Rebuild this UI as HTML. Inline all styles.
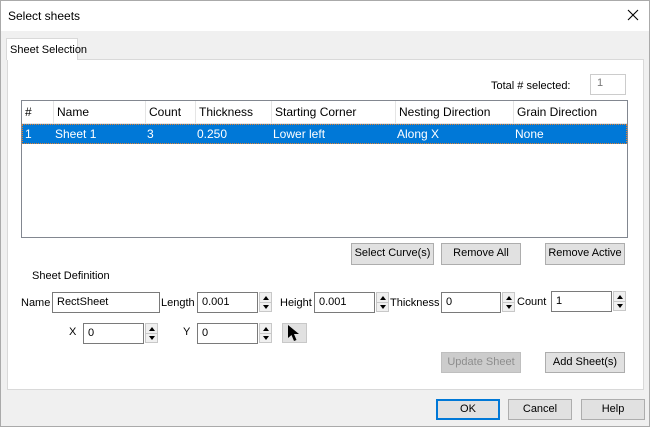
<!DOCTYPE html><html><head><style>
body{margin:0;width:650px;height:427px;overflow:hidden;background:#f0f0f0;font-family:"Liberation Sans",sans-serif;font-size:11px;color:#000;position:relative}
div,span{position:absolute;box-sizing:border-box;white-space:nowrap}
.t{line-height:14px}
.btn{background:#e1e1e1;border:1px solid #adadad;text-align:center;line-height:19px}
.in{background:#fff;border:1px solid #7a7a7a;padding-left:4px;line-height:18px}
.sp{width:13px;height:20px;background:#f0f0f0;border:1px solid #c8c8c8}
.sp:before{content:"";position:absolute;left:3px;top:3px;border:3px solid transparent;border-bottom:4px solid #000;border-top:0}
.sp:after{content:"";position:absolute;left:3px;top:12px;border:3px solid transparent;border-top:4px solid #000;border-bottom:0}
.sp i{position:absolute;left:0;right:0;top:9px;border-top:1px solid #c8c8c8}
.hd{top:0;height:23px;border-right:1px solid #e5e5e5;padding:4px 0 0 3px;font-size:12px}
</style></head><body>
<div style="left:0;top:0;width:650px;height:427px;border:1px solid #aaa"></div>
<div style="left:1px;top:1px;width:648px;height:30px;background:#fff"></div>
<div class="t" style="left:8px;top:9px;font-size:12px">Select sheets</div>
<svg style="position:absolute;left:627px;top:9px" width="12" height="12"><path d="M1 1L11 11M11 1L1 11" stroke="#000" stroke-width="1.1"/></svg>
<div style="left:7px;top:59px;width:637px;height:331px;background:#fff;border:1px solid #d9d9d9"></div>
<div style="left:6px;top:38px;width:72px;height:22px;background:#fff;border:1px solid #d9d9d9;border-bottom:none"></div>
<div class="t" style="left:10px;top:43px">Sheet Selection</div>
<div class="t" style="left:491px;top:79px">Total # selected:</div>
<div style="left:590px;top:74px;width:36px;height:21px;border:1px solid #ccc;color:#777;padding:2px 0 0 6px">1</div>
<div style="left:21px;top:100px;width:607px;height:138px;border:1px solid #828790;background:#fff">
<div class="hd" style="left:0;width:32px">#</div>
<div class="hd" style="left:32px;width:92px">Name</div>
<div class="hd" style="left:124px;width:50px">Count</div>
<div class="hd" style="left:174px;width:76px">Thickness</div>
<div class="hd" style="left:250px;width:124px">Starting Corner</div>
<div class="hd" style="left:374px;width:118px">Nesting Direction</div>
<div class="hd" style="left:492px;width:113px;border:none">Grain Direction</div>
<div style="left:0;top:22px;width:605px;height:1px;background:#e5e5e5"></div>
<div style="left:0;top:23px;width:605px;height:20px;background:#0078d7;border:1px dotted #e08030;color:#fff;font-size:12px">
<span class="t" style="left:2px;top:2px">1</span><span class="t" style="left:32px;top:2px">Sheet 1</span><span class="t" style="left:124px;top:2px">3</span><span class="t" style="left:174px;top:2px">0.250</span><span class="t" style="left:250px;top:2px">Lower left</span><span class="t" style="left:374px;top:2px">Along X</span><span class="t" style="left:492px;top:2px">None</span></div>
</div>
<div class="btn" style="left:351px;top:243px;width:83px;height:22px">Select Curve(s)</div>
<div class="btn" style="left:441px;top:243px;width:80px;height:22px">Remove All</div>
<div class="btn" style="left:545px;top:243px;width:80px;height:22px">Remove Active</div>
<div class="t" style="left:32px;top:269px">Sheet Definition</div>
<div class="t" style="left:21px;top:296px">Name</div><div class="in" style="left:52px;top:292px;width:108px;height:21px">RectSheet</div>
<div class="t" style="left:161px;top:296px">Length</div><div class="in" style="left:197px;top:292px;width:61px;height:21px">0.001</div><div class="sp" style="left:259px;top:292px"><i></i></div>
<div class="t" style="left:280px;top:296px">Height</div><div class="in" style="left:314px;top:292px;width:61px;height:21px">0.001</div><div class="sp" style="left:376px;top:292px"><i></i></div>
<div class="t" style="left:390px;top:296px">Thickness</div><div class="in" style="left:441px;top:292px;width:60px;height:21px">0</div><div class="sp" style="left:502px;top:292px"><i></i></div>
<div class="t" style="left:517px;top:295px">Count</div><div class="in" style="left:551px;top:291px;width:61px;height:21px">1</div><div class="sp" style="left:613px;top:291px"><i></i></div>
<div class="t" style="left:69px;top:325px">X</div><div class="in" style="left:83px;top:323px;width:61px;height:21px">0</div><div class="sp" style="left:145px;top:323px"><i></i></div>
<div class="t" style="left:183px;top:325px">Y</div><div class="in" style="left:197px;top:323px;width:61px;height:21px">0</div><div class="sp" style="left:259px;top:323px"><i></i></div>
<div style="left:282px;top:323px;width:25px;height:20px;background:#e1e1e1;border:1px solid #c8c8c8"></div>
<svg style="position:absolute;left:287px;top:324px" width="14" height="18"><path d="M1 1L1 14L4.5 11L7 17L9.5 16L7 10L12 10Z" fill="#000"/></svg>
<div class="btn" style="left:441px;top:352px;width:80px;height:21px;color:#8d8d8d;border-color:#bfbfbf;background:#ccc">Update Sheet</div>
<div class="btn" style="left:545px;top:352px;width:80px;height:21px">Add Sheet(s)</div>
<div class="btn" style="left:436px;top:399px;width:64px;height:21px;border:2px solid #0078d7;line-height:17px">OK</div>
<div class="btn" style="left:508px;top:399px;width:64px;height:21px">Cancel</div>
<div class="btn" style="left:581px;top:399px;width:64px;height:21px">Help</div>
</body></html>
